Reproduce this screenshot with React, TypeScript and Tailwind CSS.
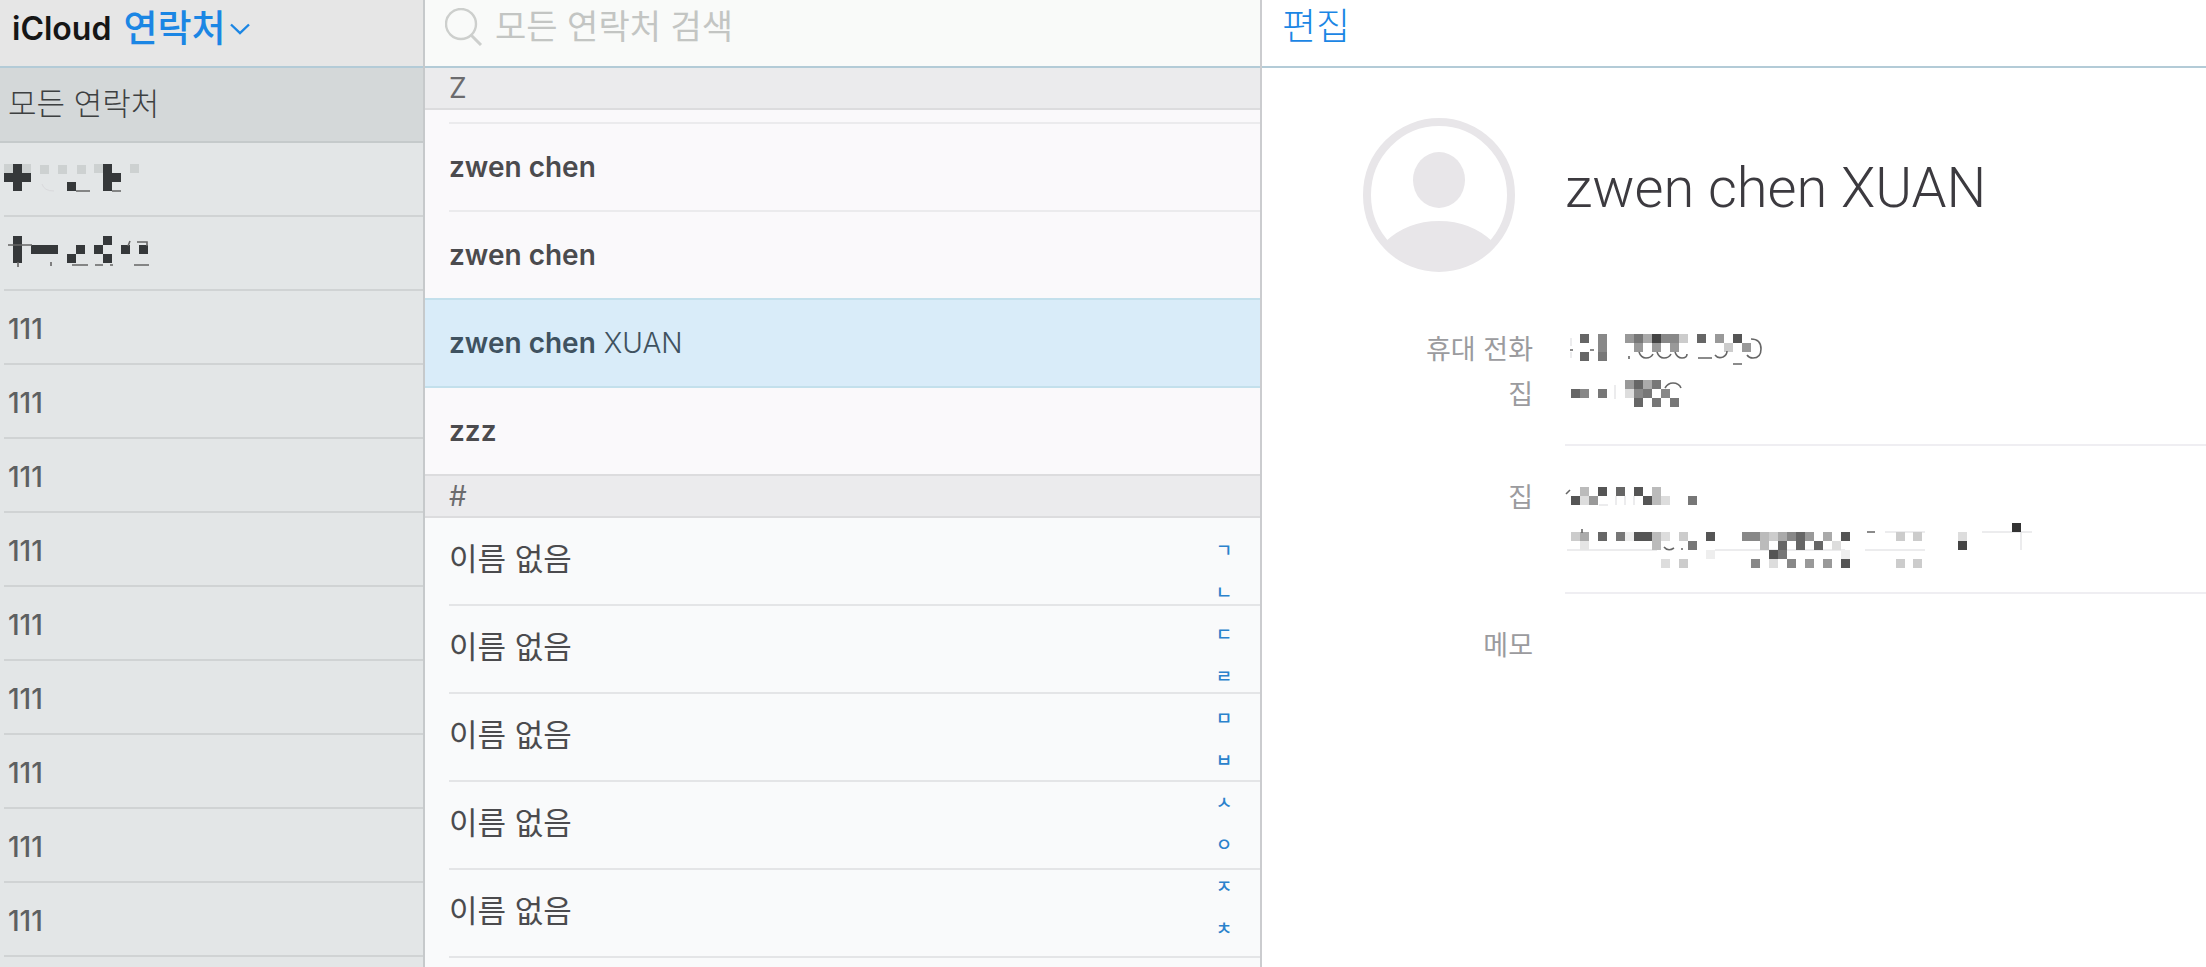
import { useState } from 'react'
import clsx from 'clsx'

type Cell = [x: number, y: number, fill: string]

interface MosaicProps {
  cells:  Cell[]
  lines?: string
  hint?:  string
  label:  string
  className?: string
}

// ── Masked values (9px blocks over the original text) ────────────────────────
const D = '#35383a'
const F = '#cdd1d1'

const GROUP_A: Cell[] = [
  [0, 0, F], [18, 0, F], [36, 1, F], [54, 1, F], [73, 1, F], [90, 0, F], [126, 0, F],
  [9, 0, D], [9, 9, D], [9, 18, D], [0, 9, D], [18, 9, D],
  [63, 18, D], [99, 0, D], [99, 9, D], [99, 18, D], [108, 9, D],
]

const GROUP_B: Cell[] = [
  [9, -2, D], [9, 7, D], [9, 16, D], [27, 7, D], [36, 7, D], [45, 7, D],
  [72, 7, D], [63, 16, D], [90, 7, D], [99, -2, D], [99, 16, D],
  [117, 7, D], [135, 7, D],
]

const MOBILE: Cell[] = [
  [15, 8, '#666'], [15, 26, '#666'], [33, 8, '#888'], [33, 17, '#888'], [33, 26, '#777'],
  [60, 8, '#999'], [69, 8, '#777'], [78, 8, '#aaa'], [87, 8, '#444'], [96, 8, '#888'],
  [105, 8, '#888'], [114, 8, '#ccc'], [69, 17, '#999'], [87, 17, '#999'], [105, 17, '#999'],
  [132, 8, '#666'], [150, 8, '#999'], [168, 8, '#555'], [159, 17, '#ccc'], [177, 17, '#999'],
]

const HOME_PHONE: Cell[] = [
  [6, 18, '#666'], [15, 18, '#888'], [33, 18, '#777'],
  [60, 9, '#999'], [69, 9, '#666'], [78, 9, '#aaa'], [87, 9, '#777'],
  [60, 18, '#ddd'], [69, 18, '#888'], [78, 18, '#777'], [96, 18, '#888'],
  [69, 27, '#666'], [87, 27, '#777'], [105, 27, '#777'],
]

const CITY: Cell[] = [
  [6, 22, '#555'], [15, 13, '#bbb'], [15, 22, '#ddd'], [24, 22, '#999'], [33, 13, '#555'],
  [51, 13, '#666'], [69, 13, '#555'], [78, 22, '#555'], [87, 13, '#bbb'], [87, 22, '#bbb'],
  [96, 22, '#ddd'], [123, 22, '#777'],
]

const STREET: Cell[] = [
  [6, 13, '#ccc'], [15, 13, '#aaa'], [33, 13, '#666'], [51, 13, '#777'], [60, 13, '#eee'],
  [69, 13, '#555'], [78, 13, '#555'], [87, 13, '#bbb'], [96, 13, '#ddd'], [114, 13, '#ccc'],
  [141, 13, '#555'], [177, 13, '#888'], [186, 13, '#888'], [195, 13, '#bbb'], [204, 13, '#ccc'],
  [213, 13, '#aaa'], [222, 13, '#888'], [231, 13, '#666'], [240, 13, '#999'], [258, 13, '#aaa'],
  [276, 13, '#555'], [331, 13, '#ccc'], [348, 13, '#ccc'], [393, 13, '#ddd'],
  [15, 22, '#e5e5e5'], [87, 22, '#bbb'], [123, 22, '#777'], [195, 22, '#bbb'], [213, 22, '#666'],
  [231, 22, '#666'], [249, 22, '#666'], [267, 22, '#ddd'], [393, 22, '#444'],
  [141, 31, '#eee'], [204, 31, '#555'], [213, 31, '#777'], [276, 31, '#eee'],
  [96, 40, '#ddd'], [114, 40, '#ccc'], [186, 40, '#888'], [204, 40, '#ddd'], [222, 40, '#888'],
  [240, 40, '#999'], [258, 40, '#999'], [276, 40, '#555'], [331, 40, '#ccc'], [348, 40, '#ccc'],
  [447, 4, '#333'],
]

const GROUPS = Array.from({ length: 9 }, (_, i) => ({ id: i, name: '111' }))
const UNNAMED = Array.from({ length: 5 }, (_, i) => ({ id: `none-${i}`, name: '이름 없음' }))
const INDEX = ['ㄱ', 'ㄴ', 'ㄷ', 'ㄹ', 'ㅁ', 'ㅂ', 'ㅅ', 'ㅇ', 'ㅈ', 'ㅊ']

const Z_CONTACTS = [
  { id: 'z1', first: 'zwen chen', last: '' },
  { id: 'z2', first: 'zwen chen', last: '' },
  { id: 'z3', first: 'zwen chen', last: 'XUAN' },
  { id: 'z4', first: 'zzz',       last: '' },
]

function Mosaic({ cells, lines, hint, label, className }: MosaicProps) {
  return (
    <svg role="img" aria-label={label} className={clsx('block overflow-visible', className)}>
      {hint && <path d={hint} fill="none" stroke="#d9d9dc" strokeWidth="1" />}
      {cells.map(([x, y, fill]) => (
        <rect key={`${x}-${y}`} x={x} y={y} width="9" height="9" fill={fill} />
      ))}
      {lines && <path d={lines} fill="none" stroke="#666" strokeWidth="1.6" />}
    </svg>
  )
}

function Avatar() {
  return (
    <svg viewBox="0 0 152 154" className="h-[154px] w-[152px]" aria-hidden="true">
      <defs>
        <clipPath id="avatar-clip">
          <ellipse cx="76" cy="77" rx="75" ry="76" />
        </clipPath>
      </defs>
      <ellipse cx="76" cy="77" rx="72" ry="73" fill="#fff" stroke="#e8e6e9" strokeWidth="8" />
      <ellipse cx="76" cy="62" rx="26" ry="28" fill="#e8e6e9" />
      <path d="M22 124 Q44 103 76 103 Q108 103 130 124 V154 H22 Z" fill="#e8e6e9" clipPath="url(#avatar-clip)" />
    </svg>
  )
}

function SectionHeader({ children }: { children: string }) {
  return (
    <h2 className="flex h-[42px] shrink-0 items-center border-b-2 border-[#dcdcde] bg-[#ebebed] pl-6 text-[28px] leading-8 text-[#6b6b6e]">
      {children}
    </h2>
  )
}

function Sidebar() {
  return (
    <aside className="flex min-w-0 flex-col overflow-hidden border-r-2 border-[#c6c9cb] bg-[#e3e6e7]">
      <header className="flex h-[68px] shrink-0 items-center gap-3 border-b-2 border-[#b3cbd7] bg-[#e6e6e6] pb-2 pl-3">
        <span className="text-[32px] leading-10 font-semibold text-[#161616]">iCloud</span>
        <button className="flex items-center gap-1 text-[37px] leading-10 font-medium text-[#1b86e4]">
          연락처
          <svg viewBox="0 0 20 12" className="h-3 w-5" fill="none" stroke="currentColor" strokeWidth="2.4">
            <path d="M1 1.5 L10 10 L19 1.5" />
          </svg>
        </button>
      </header>
      <nav className="flex flex-col text-[28px] text-[#5d6061]">
        <button className="flex h-[75px] shrink-0 items-center border-b-2 border-[#c5cacb] bg-[#d4d8d9] pl-2 text-[31px] font-light text-[#3d4041]">
          모든 연락처
        </button>
        <button className="ml-1 flex h-[74px] shrink-0 items-center border-b-2 border-[#d0d3d4]">
          <Mosaic cells={GROUP_A} label="group" hint="M38 20q2 7 12 7" lines="M72 27h14M108 27h9" className="h-[30px] w-[150px]" />
        </button>
        <button className="ml-1 flex h-[74px] shrink-0 items-center border-b-2 border-[#d0d3d4]">
          <Mosaic
            cells={GROUP_B}
            label="group"
            lines="M4 7h24M14 24v5M47 24v4M68 27h16M91 27h8M106 27h3M130 27h15M133 4h10v4M126 3l-2 5"
            className="h-[30px] w-[150px]"
          />
        </button>
        {GROUPS.map(g => (
          <button key={g.id} className="ml-1 flex h-[74px] shrink-0 items-center border-b-2 border-[#d0d3d4] pt-1 pl-1 font-medium">
            {g.name}
          </button>
        ))}
      </nav>
    </aside>
  )
}

interface ListProps {
  selected: string
  onSelect: (id: string) => void
}

function ContactList({ selected, onSelect }: ListProps) {
  return (
    <section className="flex min-w-0 flex-col overflow-hidden border-r-2 border-[#cbcccf] bg-[#f9fafb]">
      <label className="flex h-[68px] shrink-0 items-center gap-3 border-b-2 border-[#b3cbd7] bg-[#f9faf9] pb-3 pl-5">
        <svg viewBox="0 0 38 38" className="h-[38px] w-[38px] shrink-0" fill="none" stroke="#cdcfcd" strokeWidth="2.4">
          <circle cx="16" cy="16" r="15" />
          <path d="M26 27 L36 37" strokeWidth="3" />
        </svg>
        <input
          type="search"
          aria-label="모든 연락처 검색"
          placeholder="모든 연락처 검색"
          className="min-w-0 flex-1 bg-transparent text-[34px] leading-10 outline-none placeholder:text-[#c3c5c3]"
        />
      </label>

      <SectionHeader>Z</SectionHeader>
      <div className="flex shrink-0 flex-col bg-[#faf9fb]">
        <div className="ml-6 h-[14px] border-b-2 border-[#ebebed]" />
        {Z_CONTACTS.map(c => {
          const active = c.id === selected
          return (
            <button
              key={c.id}
              onClick={() => onSelect(c.id)}
              className={clsx(
                'flex shrink-0 items-center gap-2 text-[28px]',
                active
                  ? '-mt-[2px] h-[90px] border-y-2 border-[#c3e0ec] bg-[#d9ecf9] pl-6 text-[#3f5260]'
                  : 'ml-6 h-[88px] border-b-2 border-[#ebebed] text-[#4b4b4e] last:ml-0 last:border-[#dcdcde] last:pl-6',
              )}
            >
              <span className="font-semibold">{c.first}</span>
              {c.last && <span className="font-light">{c.last}</span>}
            </button>
          )
        })}
      </div>

      <SectionHeader>#</SectionHeader>
      <div className="relative flex flex-col">
        {UNNAMED.map(c => (
          <button
            key={c.id}
            onClick={() => onSelect(c.id)}
            className="ml-6 flex h-[88px] shrink-0 items-center border-b-2 border-[#e4e5e7] pb-1 text-[31px] text-[#4b4b4e]"
          >
            {c.name}
          </button>
        ))}
        <nav className="absolute top-3 right-6 flex w-6 flex-col text-center text-lg font-medium text-[#2b82cc]">
          {INDEX.map(ch => (
            <a key={ch} href={`#${ch}`} className="flex h-[42px] items-center justify-center">{ch}</a>
          ))}
        </nav>
      </div>
    </section>
  )
}

function Detail() {
  const term = 'flex h-[45px] w-[271px] shrink-0 items-center justify-end pt-1 text-[27px] text-[#9b9b9e]'
  const rule = 'flex-1 border-b-2 border-[#efeef2] pb-7'

  return (
    <main className="flex min-w-0 flex-col overflow-hidden bg-white">
      <header className="flex h-[68px] shrink-0 items-center border-b-2 border-[#b3cbd7] pb-3 pl-5">
        <button className="text-[37px] leading-10 font-light text-[#1b86e4]">편집</button>
      </header>

      <div className="flex h-[228px] shrink-0 gap-8 pt-[50px]">
        <div className="flex w-[271px] shrink-0 justify-end pr-[18px]">
          <Avatar />
        </div>
        <h1 className="pt-[34px] font-['Roboto'] text-[56px] leading-[72px] font-light whitespace-nowrap text-[#3c3a3f]">
          zwen chen XUAN
        </h1>
      </div>

      <dl>
        <div className="flex gap-8 pt-[30px]">
          <div>
            <dt className={term}>휴대 전화</dt>
            <dt className={term}>집</dt>
          </div>
          <div className={rule}>
            <dd>
              <Mosaic
                cells={MOBILE}
                label="phone"
                hint="M6 12v8M6 26v6"
                lines="M5 24h3M25 24h4M64 30v3M74 26q2 6 7 6q5 0 7 -4M92 26q2 6 7 6q5 0 7 -4M110 26q2 6 7 6q5 0 5 -4M133 32h14M150 29q3 4 8 2q4 -2 4 -6M168 38h9M186 13q10 0 10 10q0 9 -8 9q-4 0 -6 -3"
                className="h-[45px] w-[210px]"
              />
            </dd>
            <dd>
              <Mosaic cells={HOME_PHONE} label="phone" hint="M50 14v14" lines="M100 17q3 -5 8 -5q6 0 8 5" className="h-[45px] w-[210px]" />
            </dd>
          </div>
        </div>

        <div className="flex gap-8 pt-7">
          <div>
            <dt className={term}>집</dt>
          </div>
          <dd className={rule}>
            <Mosaic cells={CITY} label="address" hint="M51 22v9M60 22v9M69 22v9M34 31h9" lines="M1 20l4 -4" className="h-[45px] w-[210px]" />
            <Mosaic
              cells={STREET}
              label="address"
              hint="M2 31h90M150 31h130M320 13h40M417 13h50M300 31h60M456 13v18"
              lines="M99 28q4 5 10 1M116 30h2M302 13h8M17 10v4"
              className="h-[45px] w-[480px]"
            />
          </dd>
        </div>

        <div className="flex gap-8 pt-7">
          <dt className={term}>메모</dt>
          <dd className="flex-1" />
        </div>
      </dl>
    </main>
  )
}

export default function App() {
  const [selected, setSelected] = useState('z3')

  return (
    <div className="grid h-screen grid-cols-[425fr_837fr_944fr] overflow-hidden font-['Inter','Noto_Sans_CJK_KR',sans-serif]">
      <Sidebar />
      <ContactList selected={selected} onSelect={setSelected} />
      <Detail />
    </div>
  )
}
